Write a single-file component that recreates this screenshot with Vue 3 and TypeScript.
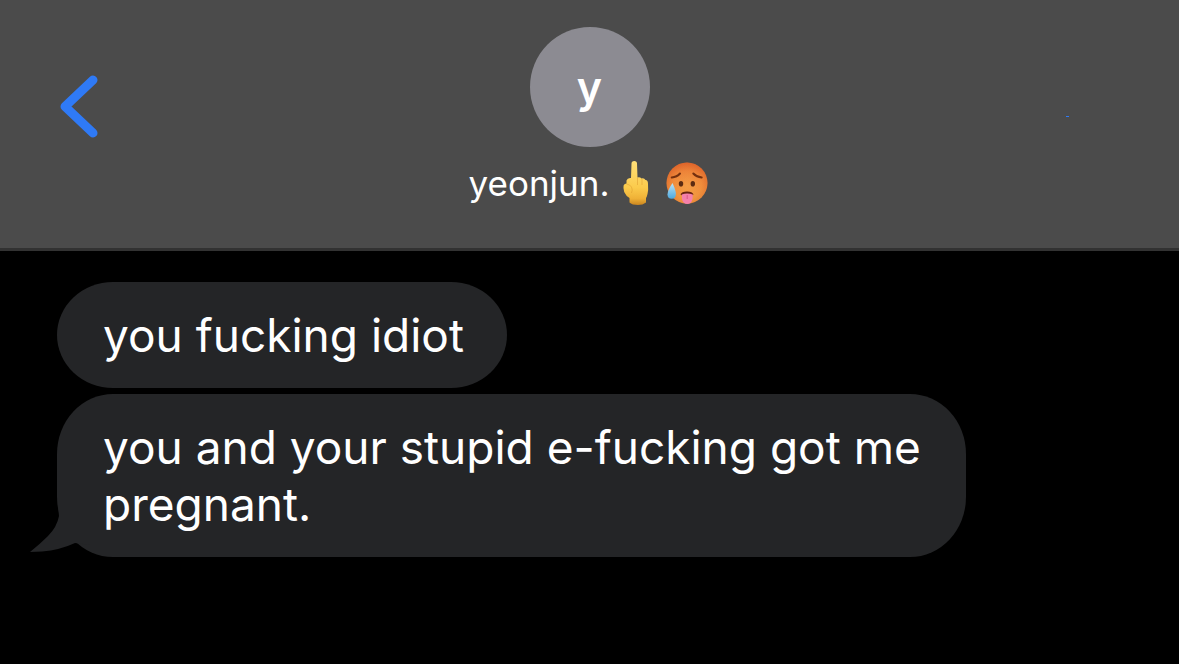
<script setup lang="ts">
interface Message {
  id: number
  text: string
  last: boolean
}

const contact = { initial: 'y', name: 'yeonjun.' }

const messages: Message[] = [
  { id: 1, text: 'you fucking idiot', last: false },
  { id: 2, text: 'you and your stupid e-fucking got me pregnant.', last: true },
]
</script>

<template>
  <main class="screen">
    <header class="bar">
      <button class="back" type="button" aria-label="Back">
        <svg width="42" height="66" viewBox="0 0 42 66" aria-hidden="true">
          <path d="M36 6 L8 32.500 L36 59" />
        </svg>
      </button>
      <div class="contact">
        <div class="avatar">{{ contact.initial }}</div>
        <h1 class="name">
          <span>{{ contact.name }}</span>
          <svg class="finger" width="30" height="46" viewBox="0 0 30 46" role="img" aria-label="Middle finger">
            <defs>
              <linearGradient id="skin" x1="0" y1="0" x2="0" y2="1">
                <stop offset="0" stop-color="#ffdf78" />
                <stop offset="0.600" stop-color="#fbcb4c" />
                <stop offset="0.850" stop-color="#efb137" />
                <stop offset="1" stop-color="#c9851f" />
              </linearGradient>
            </defs>
            <path
              fill="url(#skin)"
              d="M9.500 3.500 Q9.500 1 12.200 1 Q15 1 15 3.500 L15.500 17.500 Q18 16.800 19.500 18.500 Q22 17.500 23.500 20 Q26 20 26 24 Q26.500 30 25.500 34 Q24.800 37 24 38 L24 42.500 Q21 45 16 45 Q10 45 7.500 42.500 L7.500 38 Q4 36 2.200 32 Q1 28 1.600 25.500 Q2.500 23.500 4.500 23.500 L4.500 20.500 Q5.500 17.500 9 18 Z"
            />
            <path class="crease" d="M15.500 18 L15.500 25 M20 19 L20 25 M4.500 24 Q8 24.500 9.500 27 Q11 30 9.500 33" />
          </svg>
          <svg class="face" width="44" height="44" viewBox="0 0 44 44" role="img" aria-label="Hot face">
            <defs>
              <radialGradient id="heat" cx="0.500" cy="0.550" r="0.530">
                <stop offset="0" stop-color="#f6a548" />
                <stop offset="0.650" stop-color="#f0903c" />
                <stop offset="1" stop-color="#dc6c2a" />
              </radialGradient>
              <linearGradient id="glow" x1="0" y1="0" x2="0" y2="1">
                <stop offset="0" stop-color="#e4582c" stop-opacity="0.350" />
                <stop offset="1" stop-color="#f7b04c" stop-opacity="0.300" />
              </linearGradient>
              <linearGradient id="sweat" x1="0" y1="0" x2="0" y2="1">
                <stop offset="0" stop-color="#b9e4f8" />
                <stop offset="1" stop-color="#4fa9df" />
              </linearGradient>
            </defs>
            <circle cx="22" cy="22" r="20.500" fill="url(#heat)" />
            <circle cx="22" cy="22" r="20.500" fill="url(#glow)" />
            <path class="brow" d="M6.700 16.500 Q12 16 15 12.500 M28.300 12.500 Q31.500 16 36.700 16.500" />
            <ellipse cx="16" cy="22.800" rx="2.200" ry="2.800" fill="#5b2b12" />
            <ellipse cx="27.800" cy="22.800" rx="2.200" ry="2.800" fill="#5b2b12" />
            <path fill="#682313" d="M15.500 33.500 Q16.500 30.500 22 30.500 Q27.500 30.500 28.500 33.500 L26 35 L18 35 Z" />
            <path fill="#f580aa" d="M16.800 33.500 Q22 31.500 27.800 33.500 L27.500 38 Q26.500 43 22.200 43 Q18 43 17 38 Z" />
            <path stroke="#d95788" stroke-width="1" d="M22.200 34 L22.200 38" />
            <path fill="url(#sweat)" d="M7.500 22 Q10.900 29.500 10.900 33 Q10.900 37.700 6.800 37.700 Q2.500 37.700 2.500 33.500 Q2.500 29.500 7.500 22 Z" />
          </svg>
        </h1>
      </div>
      <span class="dot" aria-hidden="true"></span>
    </header>

    <section class="thread" aria-label="Messages">
      <div v-for="message in messages" :key="message.id" class="bubble" :class="{ last: message.last }">
        {{ message.text }}
        <svg v-if="message.last" class="tail" width="60" height="52" viewBox="0 0 60 52" aria-hidden="true">
          <path d="M28 0 L29 11 Q27 22 18 31 Q10 39 0 47 L12 46.500 Q30 45 45 38 L60 40 L60 0 Z" />
        </svg>
      </div>
    </section>
  </main>
</template>

<style>
body {
  background: #000;
}
</style>

<style scoped>
.screen {
  min-height: 100vh;
  background: #000;
  color: #fff;
  font-family: Inter, "Liberation Sans", sans-serif;
}

.bar {
  display: grid;
  grid-template-columns: 1fr auto 1fr;
  align-items: start;
  padding: 27px 57px 37px;
  border-bottom: 3px solid #323232;
  background: #4b4b4b;
}

.back {
  justify-self: start;
  margin-top: 47px;
  padding: 0;
  border: 0;
  background: none;
  cursor: pointer;
}

.back svg {
  display: block;
}

.back path {
  fill: none;
  stroke: #2f7af6;
  stroke-width: 9;
  stroke-linecap: round;
  stroke-linejoin: round;
}

.contact {
  display: flex;
  flex-direction: column;
  align-items: center;
}

.avatar {
  width: 120px;
  height: 120px;
  border-radius: 50%;
  background: #8c8b92;
  font-size: 43px;
  font-weight: 600;
  line-height: 120px;
  text-align: center;
}

.name {
  display: flex;
  align-items: center;
  height: 48px;
  margin: 12px 0 4px;
  padding-right: 2px;
  font-size: 35px;
  font-weight: 400;
  line-height: 48px;
}

.finger {
  margin-left: 12px;
}

.face {
  margin-left: 13px;
}

.crease {
  fill: none;
  stroke: #dc9a2b;
  stroke-width: 1;
  stroke-opacity: 0.5;
}

.brow {
  fill: none;
  stroke: #74300f;
  stroke-width: 2;
  stroke-linecap: round;
}

.dot {
  justify-self: end;
  width: 3px;
  height: 1px;
  margin: 89px 53px 0 0;
  background: #2f7af6;
}

.thread {
  display: flex;
  flex-direction: column;
  align-items: flex-start;
  gap: 6px;
  padding: 31px 57px;
}

.bubble {
  position: relative;
  box-sizing: border-box;
  max-width: 909px;
  padding: 25px 43px 24px 46px;
  border-radius: 56px / 53px;
  background: #242527;
  font-size: 46px;
  line-height: 57px;
}

.last {
  border-radius: 56px / 60px;
}

.tail {
  position: absolute;
  bottom: 0;
  left: -27px;
}

.tail path {
  fill: #242527;
}
</style>
